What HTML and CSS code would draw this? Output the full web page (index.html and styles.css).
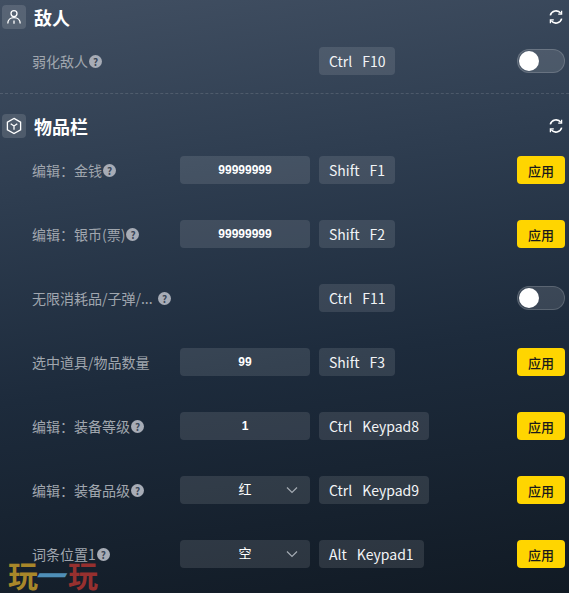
FILE: index.html
```html
<!DOCTYPE html>
<html lang="zh">
<head>
<meta charset="utf-8">
<title>敌人 / 物品栏</title>
<link rel="stylesheet" href="styles.css">
</head>
<body>
<main class="panel">
  <section class="section section-first">
    <header class="head">
      <span class="head-icon"><svg viewBox="0 0 24 24" width="24" height="24" fill="none" stroke="#fff" stroke-width="1.3"><circle cx="12" cy="8.6" r="3"/><path d="M5.800 18.600c0-3.600 2.600-6 6.200-6s6.200 2.400 6.200 6M12 15.400v3.400"/></svg></span>
      <h2 class="title">敌人</h2>
      <svg class="refresh" viewBox="0 0 16 16" width="16" height="16" fill="none" stroke="#fff" stroke-width="1.6"><path d="M2.300 6.400A5.900 5.900 0 0 1 12.800 4.400"/><path d="M13.700 9.600A5.900 5.900 0 0 1 3.200 11.600"/><path d="M13.600 1.800v3.400h-3.400" stroke-width="1.300"/><path d="M2.400 14.200v-3.400h3.400" stroke-width="1.300"/></svg>
    </header>
    <div class="row row-solo">
      <div class="label">弱化敌人<span class="help">?</span></div>
      <div class="slot"></div>
      <div class="key"><span>Ctrl</span><span>F10</span></div>
      <div class="toggle"><i></i></div>
    </div>
  </section>
  <section class="section">
    <header class="head">
      <span class="head-icon"><svg viewBox="0 0 24 24" width="24" height="24" fill="none" stroke="#fff" stroke-width="1.3"><path d="M12 4.400l6.600 3.800v7.600L12 19.600l-6.600-3.800V8.200z"/><path d="M8.700 9.700L12 12l3.300-2.300M12 12v3.800"/></svg></span>
      <h2 class="title">物品栏</h2>
      <svg class="refresh" viewBox="0 0 16 16" width="16" height="16" fill="none" stroke="#fff" stroke-width="1.6"><path d="M2.300 6.400A5.900 5.900 0 0 1 12.800 4.400"/><path d="M13.700 9.600A5.900 5.900 0 0 1 3.200 11.600"/><path d="M13.600 1.800v3.400h-3.400" stroke-width="1.300"/><path d="M2.400 14.200v-3.400h3.400" stroke-width="1.300"/></svg>
    </header>
    <div class="row">
      <div class="label">编辑：金钱<span class="help">?</span></div>
      <div class="field">99999999</div>
      <div class="key"><span>Shift</span><span>F1</span></div>
      <button class="apply">应用</button>
    </div>
    <div class="row">
      <div class="label">编辑：银币(票)<span class="help">?</span></div>
      <div class="field">99999999</div>
      <div class="key"><span>Shift</span><span>F2</span></div>
      <button class="apply">应用</button>
    </div>
    <div class="row">
      <div class="label"><span class="clip">无限消耗品/子弹/...</span><span class="help">?</span></div>
      <div class="slot"></div>
      <div class="key"><span>Ctrl</span><span>F11</span></div>
      <div class="toggle"><i></i></div>
    </div>
    <div class="row">
      <div class="label">选中道具/物品数量</div>
      <div class="field">99</div>
      <div class="key"><span>Shift</span><span>F3</span></div>
      <button class="apply">应用</button>
    </div>
    <div class="row">
      <div class="label">编辑：装备等级<span class="help">?</span></div>
      <div class="field">1</div>
      <div class="key"><span>Ctrl</span><span>Keypad8</span></div>
      <button class="apply">应用</button>
    </div>
    <div class="row">
      <div class="label">编辑：装备品级<span class="help">?</span></div>
      <div class="field field-select">红<svg class="chev" viewBox="0 0 12 8" width="12" height="8" fill="none" stroke="#a4abb3" stroke-width="1.2"><path d="M1 1.500l5 5 5-5"/></svg></div>
      <div class="key"><span>Ctrl</span><span>Keypad9</span></div>
      <button class="apply">应用</button>
    </div>
    <div class="row">
      <div class="label">词条位置1<span class="help">?</span></div>
      <div class="field field-select">空<svg class="chev" viewBox="0 0 12 8" width="12" height="8" fill="none" stroke="#a4abb3" stroke-width="1.2"><path d="M1 1.500l5 5 5-5"/></svg></div>
      <div class="key"><span>Alt</span><span>Keypad1</span></div>
      <button class="apply">应用</button>
    </div>
  </section>
</main>
<div class="watermark"><span class="wm-gold">玩</span><span class="wm-blue">一</span><span class="wm-red">玩</span></div>
</body>
</html>
```

FILE: styles.css
```css
* { box-sizing: border-box; }
html, body { height: 100%; }
body {
  margin: 0;
  overflow: hidden;
  position: relative;
  background: linear-gradient(172deg, #414f62 0%, #2e3d50 30%, #1d2b3c 60%, #111a24 100%);
  font-family: "Noto Sans CJK SC", "Noto Sans", sans-serif;
  color: #fff;
}
.panel { display: flex; flex-direction: column; }
.section-first {
  height: 94px;
  border-bottom: 1px dashed rgba(255, 255, 255, 0.13);
}
.head {
  display: flex;
  align-items: center;
  height: 24px;
  margin: 5px 5px 0 2px;
}
.section + .section .head { margin-top: 20px; }
.head-icon {
  width: 24px;
  height: 24px;
  border-radius: 4px;
  background: rgba(255, 255, 255, 0.13);
  display: flex;
}
.title {
  margin: 0 0 0 8px;
  font-size: 18px;
  font-weight: 700;
  line-height: 24px;
  flex: 1;
}
.refresh { display: block; }
.row {
  display: flex;
  align-items: center;
  height: 64px;
  padding: 0 4px 0 32px;
}
.row-solo { height: 28px; margin-top: 18px; }
.label {
  width: 148px;
  flex: none;
  font-size: 14px;
  color: #a0a6ae;
  display: flex;
  align-items: center;
  white-space: nowrap;
}
.clip { width: 125px; overflow: hidden; }
.help {
  width: 13px;
  height: 13px;
  border-radius: 50%;
  background: #a7acb6;
  color: #3a4656;
  font-size: 10px;
  font-weight: 700;
  line-height: 13px;
  text-align: center;
  margin-left: 1px;
  flex: none;
}
.slot { width: 130px; flex: none; }
.field {
  width: 130px;
  height: 28px;
  flex: none;
  position: relative;
  border-radius: 4px;
  background: rgba(255, 255, 255, 0.11);
  font-family: "Liberation Sans", "Noto Sans CJK SC", sans-serif;
  font-size: 12px;
  font-weight: 700;
  line-height: 28px;
  text-align: center;
}
.field-select { font-weight: 400; font-size: 13px; }
.chev { position: absolute; right: 12px; top: 10px; }
.key {
  height: 28px;
  margin-left: 9px;
  padding: 0 10px;
  border-radius: 4px;
  background: rgba(255, 255, 255, 0.11);
  font-size: 14px;
  line-height: 28px;
  display: flex;
  gap: 10px;
  color: #f2f4f6;
}
.apply {
  margin-left: auto;
  width: 48px;
  height: 28px;
  border: 0;
  padding: 0;
  border-radius: 4px;
  background: #ffd500;
  color: #1a1a1a;
  font: 500 13px "Noto Sans CJK SC", sans-serif;
}
.toggle {
  margin-left: auto;
  width: 48px;
  height: 24px;
  border-radius: 12px;
  background: rgba(255, 255, 255, 0.12);
  border: 1px solid rgba(255, 255, 255, 0.16);
  display: flex;
  align-items: center;
  padding-left: 1px;
}
.toggle i {
  width: 20px;
  height: 20px;
  border-radius: 50%;
  background: #fff;
}
.watermark {
  position: absolute;
  left: 8px;
  bottom: 3px;
  font-size: 30px;
  line-height: 32px;
  font-weight: 700;
  font-family: "Noto Sans CJK SC", sans-serif;
  white-space: nowrap;
}
.wm-gold { color: #a8872a; }
.wm-blue { color: #4f8fb8; display: inline-block; transform: skewX(-30deg); }
.wm-red { color: #96302f; }
```
